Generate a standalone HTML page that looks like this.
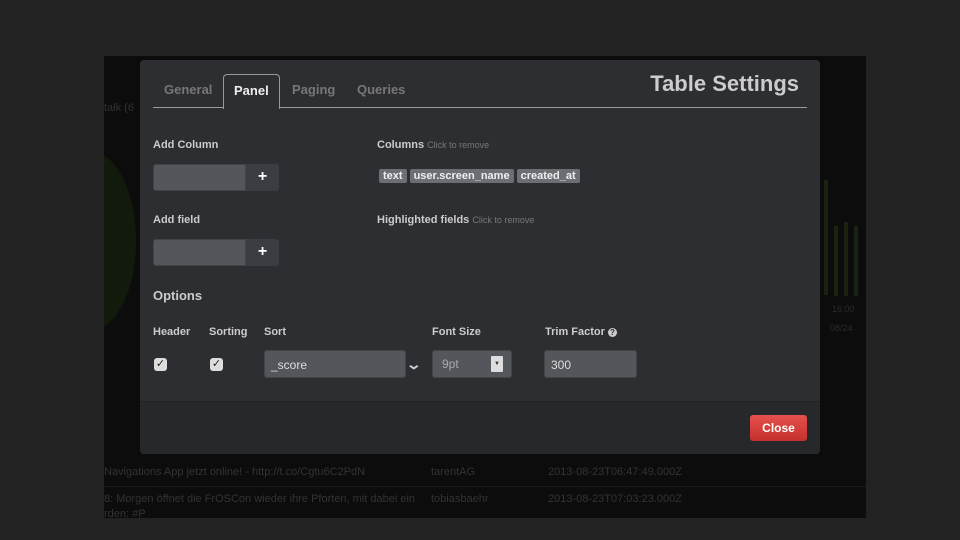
<!DOCTYPE html>
<html><head><meta charset="utf-8"><style>
*{margin:0;padding:0;box-sizing:border-box}
body{width:960px;height:540px;background:#222;font-family:"Liberation Sans",sans-serif;position:relative;overflow:hidden}
.inner{position:absolute;left:104px;top:56px;width:762px;height:462px;background:#0c0c0c;overflow:hidden}
.a{position:absolute}
.modal{position:absolute;left:140px;top:60px;width:680px;height:394px;background:#2c2e32;border-radius:4px;overflow:hidden}
.foot{position:absolute;left:0;top:341px;width:680px;height:53px;background:#26282b;border-top:1px solid #222}
.lbl{position:absolute;font-size:11px;font-weight:bold;color:#ccc}
.sm{font-size:9px;font-weight:normal;color:#777}
.inp{position:absolute;background:#53575b;border:1px solid #444;border-radius:3px}
.plus{position:absolute;background:#3a3d41;color:#fff;font-weight:bold;font-size:16px;text-align:center;line-height:26px;border-radius:0 3px 3px 0}
.tag{display:inline-block;background:#6b6f73;color:#eee;font-size:11px;font-weight:bold;padding:1px 4px;border-radius:2px;margin-right:3px}
.cb{position:absolute;width:13px;height:13px;background:#ddd;border-radius:3px;color:#222;font-size:11px;line-height:13px;text-align:center}
.tab{position:absolute;top:22px;font-size:13px;font-weight:bold;color:#777}
.bg{font-size:11px;color:#333}
</style></head><body>
<div class="inner">
<div class="a" style="left:-60px;top:95px;width:92px;height:180px;border-radius:50%;background:#121a0c"></div>
<div class="a bg" style="left:0;top:46px">talk (6</div>
<div class="a" style="left:720px;top:124px;width:4px;height:115px;background:#18240f"></div>
<div class="a" style="left:730px;top:170px;width:4px;height:70px;background:#18240f"></div>
<div class="a" style="left:740px;top:166px;width:4px;height:74px;background:#18240f"></div>
<div class="a" style="left:750px;top:170px;width:4px;height:70px;background:#18240f"></div>
<div class="a" style="left:728px;top:248px;font-size:9px;color:#2c2c2c">16:00</div>
<div class="a" style="left:726px;top:267px;font-size:9px;color:#2c2c2c">08/24</div>
<div class="a bg" style="left:0;top:410px">Navigations App jetzt online! - http://t.co/Cgtu6C2PdN</div>
<div class="a bg" style="left:327px;top:410px">tarentAG</div>
<div class="a bg" style="left:444px;top:410px">2013-08-23T06:47:49.000Z</div>
<div class="a" style="left:0;top:430px;width:762px;height:1px;background:#1a1a1a"></div>
<div class="a bg" style="left:0;top:437px">8: Morgen öffnet die FrOSCon wieder ihre Pforten, mit dabei ein</div>
<div class="a bg" style="left:327px;top:437px">tobiasbaehr</div>
<div class="a bg" style="left:444px;top:437px">2013-08-23T07:03:23.000Z</div>
<div class="a bg" style="left:0;top:452px">rden: #P</div>
</div>
<div class="modal">
<div class="a" style="left:13px;top:47px;width:654px;height:1px;background:#999"></div>
<div class="tab" style="left:24px">General</div>
<div class="a" style="left:83px;top:14px;width:57px;height:35px;border:1px solid #999;border-bottom:none;border-radius:4px 4px 0 0;background:#2c2e32"></div>
<div class="tab" style="left:94px;color:#eee;top:23px">Panel</div>
<div class="tab" style="left:152px">Paging</div>
<div class="tab" style="left:217px">Queries</div>
<div class="a" style="right:21px;top:11px;font-size:22px;font-weight:bold;color:#ccc">Table Settings</div>
<div class="lbl" style="left:13px;top:79px">Add Column</div>
<div class="inp" style="left:13px;top:104px;width:93px;height:27px;border-radius:3px 0 0 3px"></div>
<div class="plus" style="left:106px;top:104px;width:33px;height:27px">+</div>
<div class="lbl" style="left:13px;top:154px">Add field</div>
<div class="inp" style="left:13px;top:179px;width:93px;height:27px;border-radius:3px 0 0 3px"></div>
<div class="plus" style="left:106px;top:179px;width:33px;height:27px">+</div>
<div class="lbl" style="left:237px;top:79px">Columns <span class="sm">Click to remove</span></div>
<div class="a" style="left:239px;top:106px"><span class="tag">text</span><span class="tag">user.screen_name</span><span class="tag">created_at</span></div>
<div class="lbl" style="left:237px;top:154px">Highlighted fields <span class="sm">Click to remove</span></div>
<div class="lbl" style="left:13px;top:228px;font-size:13px">Options</div>
<div class="lbl" style="left:13px;top:266px">Header</div>
<div class="lbl" style="left:69px;top:266px">Sorting</div>
<div class="lbl" style="left:124px;top:266px">Sort</div>
<div class="lbl" style="left:292px;top:266px">Font Size</div>
<div class="lbl" style="left:405px;top:266px">Trim Factor <span style="display:inline-block;width:9px;height:9px;border-radius:50%;background:#ccc;color:#2c2e32;font-size:8px;line-height:9px;text-align:center">?</span></div>
<div class="cb" style="left:14px;top:298px">✓</div>
<div class="cb" style="left:70px;top:298px">✓</div>
<div class="inp" style="left:124px;top:290px;width:142px;height:28px;color:#ddd;font-size:12px;padding:7px 6px">_score</div>
<div class="a" style="left:268px;top:296px;color:#ccc;font-size:14px;font-weight:bold;transform:scaleX(1.4)">⌄</div>
<div class="inp" style="left:292px;top:290px;width:80px;height:28px;color:#aaa;font-size:12px;padding:6px 9px">9pt<div class="a" style="left:58px;top:5px;width:12px;height:16px;background:#ddd;border-radius:1px;font-size:6px;color:#333;text-align:center;line-height:16px">▼</div></div>
<div class="inp" style="left:404px;top:290px;width:93px;height:28px;color:#ddd;font-size:12px;padding:7px 6px">300</div>
<div class="foot"></div>
<div class="a" style="left:610px;top:355px;width:57px;height:26px;background:linear-gradient(#e5514c,#c5302b);border-radius:3px;color:#fff;font-size:12px;font-weight:bold;text-align:center;line-height:26px">Close</div>
</div>
</body></html>
